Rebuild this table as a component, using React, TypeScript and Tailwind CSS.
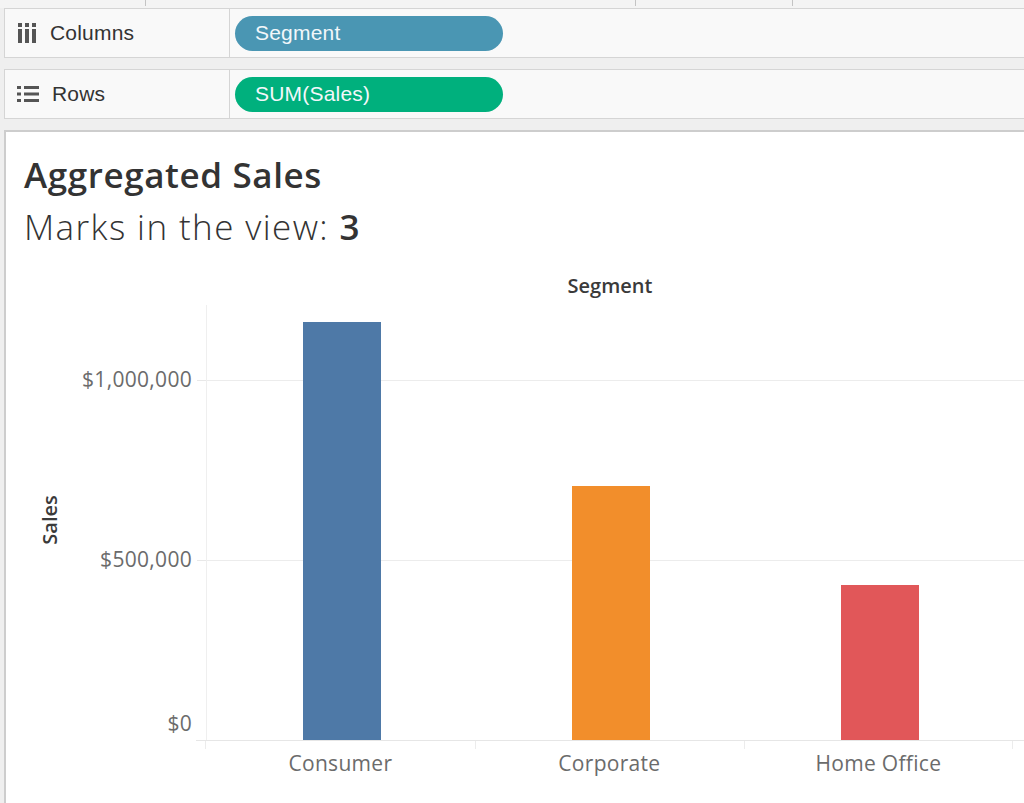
import React from "react";

/**
 * Segment totals shown in the view
 */
const segments = [
  { name: "Consumer", sales: 1161901, color: "bg-[#4e79a7]" },
  { name: "Corporate", sales: 706146, color: "bg-[#f28e2b]" },
  { name: "Home Office", sales: 429653, color: "bg-[#e15759]" },
];

const PLOT_H = 435; // px from top of the plot to the $0 baseline
const PX_PER_DOLLAR = 180 / 500000;

const yTicks = [
  { label: "$1,000,000", value: 1000000, nudge: 0 },
  { label: "$500,000", value: 500000, nudge: 0 },
  { label: "$0", value: 0, nudge: -16 }, // kept inside the plot like Tableau does
];

function ColumnsIcon() {
  return (
    <svg width="20" height="22" viewBox="0 0 20 22" className="text-[#555]">
      <rect x="1" y="1" width="4" height="4" fill="currentColor" />
      <rect x="8" y="1" width="4" height="4" fill="currentColor" />
      <rect x="15" y="1" width="4" height="4" fill="currentColor" />
      <rect x="1" y="7" width="4" height="14" fill="currentColor" />
      <rect x="8" y="7" width="4" height="14" fill="currentColor" />
      <rect x="15" y="7" width="4" height="14" fill="currentColor" />
    </svg>
  );
}

function RowsIcon() {
  return (
    <svg width="22" height="18" viewBox="0 0 22 18" className="text-[#555]">
      <rect x="0" y="1" width="4" height="3" fill="currentColor" />
      <rect x="7" y="1" width="15" height="3" fill="currentColor" />
      <rect x="0" y="7.5" width="4" height="3" fill="currentColor" />
      <rect x="7" y="7.5" width="15" height="3" fill="currentColor" />
      <rect x="0" y="14" width="4" height="3" fill="currentColor" />
      <rect x="7" y="14" width="15" height="3" fill="currentColor" />
    </svg>
  );
}

/**
 * One shelf row (Columns / Rows) with its pill
 */
function Shelf({
  icon,
  label,
  pill,
  pillColor,
}: {
  icon: React.ReactNode;
  label: string;
  pill: string;
  pillColor: string;
}) {
  return (
    <div className="ml-[4px] h-[50px] flex bg-[#f9f9f9] border border-r-0 border-[#d5d5d5]">
      <div className="w-[225px] flex items-center border-r border-[#d5d5d5] pl-[12px] gap-[13px]">
        {icon}
        <span className="text-[21px] text-[#333] tracking-[0.2px]">{label}</span>
      </div>
      <div className="flex items-center pl-[5px]">
        <div
          className={`w-[268px] h-[35px] rounded-full flex items-center pl-[20px] text-[21px] text-[#f2f7fa] tracking-[0.2px] ${pillColor}`}
        >
          {pill}
        </div>
      </div>
    </div>
  );
}

/**
 * Bar chart of sales per segment
 */
function SalesChart() {
  return (
    <div className="flex flex-col mt-[22px]">
      {/* Column header */}
      <div className="h-[36px] flex">
        <div className="w-[200px]" />
        <div className="w-[808px] text-center text-[20px] font-semibold text-[#3a3a3a] leading-[34px]">
          Segment
        </div>
      </div>

      <div className="flex">
        {/* Axis title */}
        <div className="w-[88px] h-[435px] flex justify-center">
          <div className="mt-[187px] w-[20px] h-[56px] flex items-center justify-center">
            <span className="-rotate-90 text-[20px] font-semibold text-[#3a3a3a] whitespace-nowrap">
              Sales
            </span>
          </div>
        </div>

        {/* Axis labels */}
        <div className="relative w-[112px] h-[435px]">
          {yTicks.map((t) => (
            <div
              key={t.label}
              className="absolute right-[14px] text-[21px] text-[#6b6b6b] leading-[24px] tracking-[0.3px]"
              style={{ top: PLOT_H - t.value * PX_PER_DOLLAR - 13 + t.nudge }}
            >
              {t.label}
            </div>
          ))}
          {yTicks.slice(0, 2).map((t) => (
            <div
              key={t.label + "tick"}
              className="absolute right-0 w-[9px] h-px bg-[#e8e8e8]"
              style={{ top: PLOT_H - t.value * PX_PER_DOLLAR }}
            />
          ))}
        </div>

        {/* Plot */}
        <div className="relative w-[818px] h-[435px] border-l border-[#efefef]">
          {yTicks.slice(0, 2).map((t) => (
            <div
              key={t.label + "grid"}
              className="absolute left-0 right-0 h-px bg-[#ececec]"
              style={{ top: PLOT_H - t.value * PX_PER_DOLLAR }}
            />
          ))}
          <div className="relative flex h-full items-end">
            {segments.map((s) => (
              <div key={s.name} className="w-[269px] h-full flex items-end justify-center">
                <div
                  className={`w-[78px] ${s.color}`}
                  style={{ height: s.sales * PX_PER_DOLLAR }}
                />
              </div>
            ))}
          </div>
        </div>
      </div>

      {/* Baseline, ticks and category labels */}
      <div className="flex">
        <div className="w-[191px]" />
        <div className="w-[833px] border-t border-[#e6e6e6] flex flex-col">
          <div className="h-[8px] flex">
            <div className="w-[9px]" />
            <div className="w-px bg-[#ececec]" />
            <div className="w-[269px]" />
            <div className="w-px bg-[#ececec]" />
            <div className="w-[268px]" />
            <div className="w-px bg-[#ececec]" />
            <div className="w-[267px]" />
            <div className="w-px bg-[#ececec]" />
          </div>
          <div className="flex pl-[10px]">
            {segments.map((s) => (
              <div key={s.name} className="w-[269px] flex justify-center pt-[1px]">
                <span className="text-[21px] text-[#6b6b6b] tracking-[0.3px] leading-[26px]">
                  {s.name}
                </span>
              </div>
            ))}
          </div>
        </div>
      </div>
    </div>
  );
}

export default function App() {
  return (
    <div className="w-[1024px] h-[803px] overflow-hidden bg-[#efefef] flex flex-col font-['Open_Sans',sans-serif]">
      {/* Top strip */}
      <div className="h-[8px] flex bg-[#f4f4f4]">
        <div className="w-[145px]" />
        <div className="w-px h-[6px] bg-[#c4c4c4]" />
        <div className="w-[489px]" />
        <div className="w-px h-[6px] bg-[#c4c4c4]" />
        <div className="w-[156px]" />
        <div className="w-px h-[6px] bg-[#c4c4c4]" />
      </div>

      <div className="font-['Liberation_Sans',sans-serif]">
        <Shelf icon={<ColumnsIcon />} label="Columns" pill="Segment" pillColor="bg-[#4a96b3]" />
        <div className="h-[11px]" />
        <Shelf icon={<RowsIcon />} label="Rows" pill="SUM(Sales)" pillColor="bg-[#00b07d]" />
        <div className="h-[11px]" />
      </div>

      {/* View */}
      <div className="ml-[4px] flex-1 bg-white border-l-2 border-t-2 border-[#cdcdcd] pl-[18px] pt-[23px]">
        <div className="text-[35px] font-semibold text-[#333] leading-[40px] tracking-[0.6px]">
          Aggregated Sales
        </div>
        <div className="mt-[12px] text-[35px] font-light text-[#333] leading-[40px] tracking-[1.4px]">
          Marks in the view: <span className="font-semibold">3</span>
        </div>
        <div className="-ml-[18px]">
          <SalesChart />
        </div>
      </div>
    </div>
  );
}
